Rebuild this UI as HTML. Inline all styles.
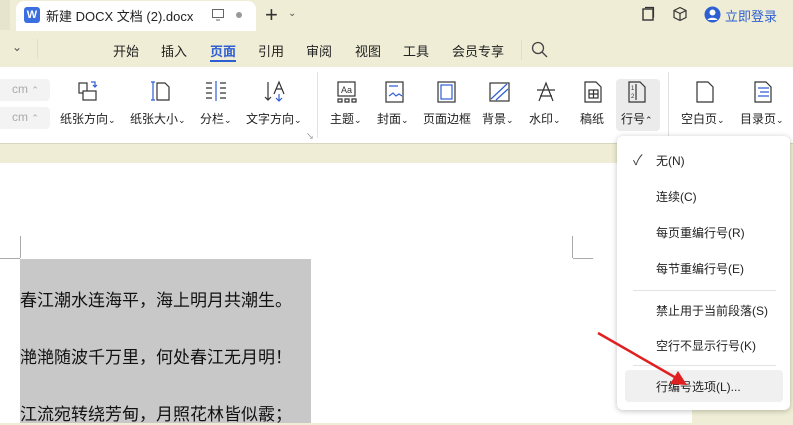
<!DOCTYPE html><html><head><meta charset="utf-8"><style>
*{margin:0;padding:0;box-sizing:border-box}
body{width:793px;height:423px;overflow:hidden;position:relative;background:#efedd5;font-family:"Liberation Sans","Noto Sans CJK SC",sans-serif;color:#222}
.a{position:absolute;white-space:nowrap}
.t{font-size:13px}
.ic{position:absolute}
</style></head><body>
<div class="a" style="left:0;top:0;width:10px;height:30px;background:#e6e4cc"></div>
<div class="a" style="left:16px;top:1px;width:240px;height:30px;background:#fff;border-radius:8px 8px 0 0"></div>
<div class="a" style="left:24px;top:7px;width:16px;height:16px;background:#3b6fe0;border-radius:3px;color:#fff;font-size:11px;font-weight:bold;text-align:center;line-height:16px">W</div>
<div class="a t" style="left:46px;top:6px;font-size:13px">新建 DOCX 文档 (2).docx</div>
<svg class="ic" style="left:211px;top:8px" width="14" height="14"><rect x="1.5" y="1.5" width="11" height="8" fill="none" stroke="#666"/><path d="M5 12h4" stroke="#666"/></svg>
<div class="a" style="left:236px;top:12px;width:6px;height:6px;border-radius:3px;background:#999"></div>
<div class="a" style="left:265px;top:2px;font-size:22px;color:#333">+</div>
<div class="a" style="left:288px;top:8px;font-size:10px;color:#555">⌄</div>
<svg class="ic" style="left:640px;top:6px" width="16" height="16"><rect x="3" y="3" width="10" height="11" fill="none" stroke="#333" stroke-width="1.4"/><path d="M5 1.5h8.5v10" fill="none" stroke="#333" stroke-width="1.2"/></svg>
<svg class="ic" style="left:672px;top:6px" width="16" height="16"><path d="M8 1.5l6 3v7l-6 3-6-3v-7z M2 4.5l6 3 6-3 M8 7.5v7" fill="none" stroke="#333" stroke-width="1.2"/></svg>
<svg class="ic" style="left:704px;top:6px" width="17" height="17"><circle cx="8.5" cy="8.5" r="8" fill="#2d5fd3"/><circle cx="8.5" cy="6.5" r="3" fill="#fff"/><path d="M3.5 14c1-3 9-3 10 0" fill="#fff"/></svg>
<div class="a" style="left:725px;top:6px;font-size:13px;color:#2d5fd3">立即登录</div>
<div class="a" style="left:12px;top:40px;font-size:12px;color:#555">⌄</div>
<div class="a" style="left:37px;top:39px;width:1px;height:20px;background:#ddd"></div>
<div class="a t" style="left:113px;top:41px">开始</div>
<div class="a t" style="left:161px;top:41px">插入</div>
<div class="a t" style="left:210px;top:41px;color:#2d5fd3;font-weight:bold">页面</div>
<div class="a" style="left:210px;top:60px;width:26px;height:2px;background:#2d5fd3"></div>
<div class="a t" style="left:258px;top:41px">引用</div>
<div class="a t" style="left:306px;top:41px">审阅</div>
<div class="a t" style="left:355px;top:41px">视图</div>
<div class="a t" style="left:403px;top:41px">工具</div>
<div class="a t" style="left:452px;top:41px">会员专享</div>
<div class="a" style="left:521px;top:40px;width:1px;height:20px;background:#ddd"></div>
<svg class="ic" style="left:531px;top:41px" width="17" height="17"><circle cx="7" cy="7" r="5.5" fill="none" stroke="#444" stroke-width="1.3"/><path d="M11 11l5 5" stroke="#444" stroke-width="1.3"/></svg>
<div class="a" style="left:0;top:67px;width:793px;height:76px;background:#fff"></div>
<div class="a" style="left:0;top:79px;width:50px;height:22px;background:#f3f3f3;border-radius:0 4px 4px 0;color:#aaa;font-size:12px;padding:3px 0 0 12px">cm <span style="font-size:9px">⌃</span></div>
<div class="a" style="left:0;top:107px;width:50px;height:22px;background:#f3f3f3;border-radius:0 4px 4px 0;color:#aaa;font-size:12px;padding:3px 0 0 12px">cm <span style="font-size:9px">⌃</span></div>
<svg class="ic" style="left:78px;top:80px" width="22" height="22" fill="none" stroke="#333" stroke-width="1.2"><rect x="1" y="3" width="8" height="10"/><rect x="5" y="11" width="13" height="9" fill="#fff"/><path d="M13 2h4v5M15 5l2 2 2-2" stroke="#2d5fd3"/></svg>
<svg class="ic" style="left:150px;top:80px" width="22" height="22" fill="none" stroke="#333" stroke-width="1.2"><path d="M1 2h4M1 20h4M3 2v18" stroke="#2d5fd3"/><path d="M7 3h8l4 4v13H7z"/></svg>
<svg class="ic" style="left:205px;top:80px" width="22" height="22" fill="none" stroke="#333" stroke-width="1.2"><path d="M1 3h6M1 8h6M1 13h6M1 18h6M15 3h6M15 8h6M15 13h6M15 18h6"/><path d="M11 1v20" stroke="#2d5fd3"/></svg>
<svg class="ic" style="left:264px;top:80px" width="22" height="22" fill="none" stroke="#333" stroke-width="1.2"><path d="M4 2v18M1 17l3 3 3-3M10 14l5-12 5 12M12 9h6"/><path d="M15 14v7M12 18l3 3 3-3" stroke="#2d5fd3"/></svg>
<div class="a t" style="left:60px;top:110px;font-size:12px">纸张方向<span style="font-size:9px">⌄</span></div>
<div class="a t" style="left:130px;top:110px;font-size:12px">纸张大小<span style="font-size:9px">⌄</span></div>
<div class="a t" style="left:200px;top:110px;font-size:12px">分栏<span style="font-size:9px">⌄</span></div>
<div class="a t" style="left:246px;top:110px;font-size:12px">文字方向<span style="font-size:9px">⌄</span></div>
<div class="a" style="left:306px;top:131px;font-size:8px;color:#888">↘</div>
<div class="a" style="left:317px;top:72px;width:1px;height:66px;background:#e2e2e2"></div>
<svg class="ic" style="left:336px;top:81px" width="22" height="22" fill="none" stroke="#333" stroke-width="1.2"><rect x="2" y="1" width="17" height="14"/><text x="5" y="12" font-size="9" fill="#333" stroke="none" font-family="Liberation Sans">Aa</text><path d="M2 18h4v3H2zM9 18h4v3H9zM16 18h4v3h-4z"/></svg>
<svg class="ic" style="left:384px;top:81px" width="22" height="22" fill="none" stroke="#333" stroke-width="1.2"><rect x="2" y="1" width="17" height="20"/><path d="M5 5h9M5 15l4-3 3 3 3-2 3 2" stroke="#2d5fd3"/></svg>
<svg class="ic" style="left:436px;top:81px" width="22" height="22" fill="none" stroke="#333" stroke-width="1.2"><rect x="2" y="1" width="17" height="20"/><rect x="5" y="4" width="11" height="14" stroke="#2d5fd3"/></svg>
<svg class="ic" style="left:488px;top:81px" width="22" height="22" fill="none" stroke="#333" stroke-width="1.2"><rect x="2" y="2" width="19" height="18"/><path d="M3 18L19 3M8 19L20 8" stroke="#2d5fd3"/></svg>
<svg class="ic" style="left:535px;top:81px" width="22" height="22" fill="none" stroke="#333" stroke-width="1.2"><path d="M4 20L11 2l7 18M2 9h18M5 15h12"/></svg>
<svg class="ic" style="left:582px;top:81px" width="22" height="22" fill="none" stroke="#333" stroke-width="1.2"><path d="M3 1h11l5 5v15H3z"/><rect x="7" y="9" width="9" height="8"/><path d="M11.5 9v8M7 13h9"/></svg>
<div class="a" style="left:616px;top:79px;width:44px;height:52px;background:#ebebeb;border-radius:4px"></div>
<svg class="ic" style="left:626px;top:81px" width="22" height="22" fill="none" stroke="#333" stroke-width="1.2"><path d="M3 1h11l5 5v15H3z"/><path d="M10 3v16"/><text x="5" y="9" font-size="6" fill="#333" stroke="none">1</text><text x="5" y="17" font-size="6" fill="#333" stroke="none">2</text></svg>
<div class="a" style="left:330px;top:110px;font-size:12px">主题<span style="font-size:9px">⌄</span></div>
<div class="a" style="left:377px;top:110px;font-size:12px">封面<span style="font-size:9px">⌄</span></div>
<div class="a" style="left:423px;top:110px;font-size:12px">页面边框</div>
<div class="a" style="left:482px;top:110px;font-size:12px">背景<span style="font-size:9px">⌄</span></div>
<div class="a" style="left:529px;top:110px;font-size:12px">水印<span style="font-size:9px">⌄</span></div>
<div class="a" style="left:580px;top:110px;font-size:12px">稿纸</div>
<div class="a" style="left:621px;top:110px;font-size:12px">行号<span style="font-size:9px">⌃</span></div>
<div class="a" style="left:668px;top:72px;width:1px;height:66px;background:#e2e2e2"></div>
<svg class="ic" style="left:694px;top:81px" width="22" height="22" fill="none" stroke="#333" stroke-width="1.2"><path d="M3 1h11l5 5v15H3z"/></svg>
<svg class="ic" style="left:752px;top:81px" width="22" height="22" fill="none" stroke="#333" stroke-width="1.2"><path d="M3 1h11l5 5v15H3z"/><path d="M6 7h11M8 11h9M6 15h11" stroke="#2d5fd3"/></svg>
<div class="a" style="left:681px;top:110px;font-size:12px">空白页<span style="font-size:9px">⌄</span></div>
<div class="a" style="left:740px;top:110px;font-size:12px">目录页<span style="font-size:9px">⌄</span></div>
<div class="a" style="left:0;top:143px;width:793px;height:1px;background:#d8d6c0"></div>
<div class="a" style="left:0;top:163px;width:692px;height:260px;background:#fff"></div>
<div class="a" style="left:20px;top:236px;width:1px;height:22px;background:#aaa"></div>
<div class="a" style="left:0;top:258px;width:20px;height:1px;background:#aaa"></div>
<div class="a" style="left:572px;top:236px;width:1px;height:22px;background:#aaa"></div>
<div class="a" style="left:573px;top:258px;width:20px;height:1px;background:#aaa"></div>
<div class="a" style="left:20px;top:259px;width:291px;height:164px;background:#c8c8c8"></div>
<div class="a" style="left:20px;top:286px;font-size:17px;color:#111">春江潮水连海平，海上明月共潮生。</div>
<div class="a" style="left:20px;top:343px;font-size:17px;color:#111">滟滟随波千万里，何处春江无月明！</div>
<div class="a" style="left:20px;top:400px;font-size:17px;color:#111">江流宛转绕芳甸，月照花林皆似霰；</div>
<div class="a" style="left:617px;top:136px;width:173px;height:274px;background:#fff;border-radius:6px;box-shadow:0 1px 6px rgba(0,0,0,.25)"></div>
<div class="a" style="left:633px;top:150px;font-size:14px;color:#444">✓</div>
<div class="a" style="left:656px;top:152px;font-size:12px">无(N)</div>
<div class="a" style="left:656px;top:188px;font-size:12px">连续(C)</div>
<div class="a" style="left:656px;top:224px;font-size:12px">每页重编行号(R)</div>
<div class="a" style="left:656px;top:260px;font-size:12px">每节重编行号(E)</div>
<div class="a" style="left:633px;top:290px;width:143px;height:1px;background:#e3e3e3"></div>
<div class="a" style="left:656px;top:302px;font-size:12px">禁止用于当前段落(S)</div>
<div class="a" style="left:656px;top:337px;font-size:12px">空行不显示行号(K)</div>
<div class="a" style="left:633px;top:365px;width:143px;height:1px;background:#e3e3e3"></div>
<div class="a" style="left:625px;top:370px;width:158px;height:32px;background:#f0f0f0;border-radius:4px"></div>
<div class="a" style="left:656px;top:378px;font-size:12px">行编号选项(L)...</div>
<svg class="ic" style="left:590px;top:325px" width="110" height="70"><path d="M8 8L88 54" stroke="#e02020" stroke-width="2.5"/><path d="M97 60L80 59 88 46z" fill="#e02020"/></svg>
</body></html>
